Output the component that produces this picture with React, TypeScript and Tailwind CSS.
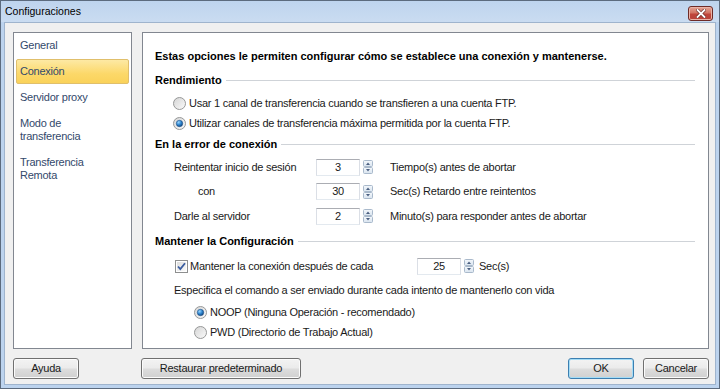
import React from "react";

function Radio({ checked }: { checked?: boolean }) {
  return (
    <svg width="13" height="13" viewBox="0 0 13 13" className="shrink-0">
      <defs>
        <linearGradient id="rOuter" x1="0" y1="0" x2="1" y2="1">
          <stop offset="0" stopColor="#d4d4d4" />
          <stop offset="1" stopColor="#fbfbfb" />
        </linearGradient>
        <radialGradient id="rDot" cx="0.35" cy="0.3" r="0.8">
          <stop offset="0" stopColor="#9bd7ff" />
          <stop offset="0.5" stopColor="#2f86d0" />
          <stop offset="1" stopColor="#0c3c72" />
        </radialGradient>
      </defs>
      <circle cx="6.5" cy="6.5" r="6" fill="url(#rOuter)" stroke="#979898" strokeWidth="1" />
      {checked && <circle cx="6.5" cy="6.5" r="3.2" fill="url(#rDot)" stroke="#1f4f86" strokeWidth="0.6" />}
    </svg>
  );
}

function Checkbox() {
  return (
    <svg width="13" height="13" viewBox="0 0 13 13" className="shrink-0">
      <defs>
        <linearGradient id="cbIn" x1="0" y1="0" x2="1" y2="1">
          <stop offset="0" stopColor="#dcdcdc" />
          <stop offset="1" stopColor="#fbfbfb" />
        </linearGradient>
      </defs>
      <rect x="0.5" y="0.5" width="12" height="12" fill="#fff" stroke="#8e8f8f" />
      <rect x="2" y="2" width="9" height="9" fill="url(#cbIn)" />
      <path d="M3 6.5 L5.3 9 L10 3.2" fill="none" stroke="#3b5da0" strokeWidth="1.8" />
    </svg>
  );
}

function SpinArrows() {
  return (
    <svg width="10" height="14" viewBox="0 0 10 14" className="shrink-0">
      <defs>
        <linearGradient id="spG" x1="0" y1="0" x2="0" y2="1">
          <stop offset="0" stopColor="#f4f8fc" />
          <stop offset="1" stopColor="#d9e4ef" />
        </linearGradient>
      </defs>
      <rect x="0.5" y="0.5" width="9" height="6" rx="1" fill="url(#spG)" stroke="#a9b9cb" />
      <rect x="0.5" y="7.5" width="9" height="6" rx="1" fill="url(#spG)" stroke="#a9b9cb" />
      <path d="M3 5 L5 2.5 L7 5 Z" fill="#4a5f80" />
      <path d="M3 9 L5 11.5 L7 9 Z" fill="#4a5f80" />
    </svg>
  );
}

function Spin({ value }: { value: string }) {
  return (
    <div className="flex items-center shrink-0">
      <div className="w-[44px] h-[17px] bg-white border border-[#abadb3] border-l-[#dbdfe6] border-r-[#dbdfe6] border-b-[#e3e9ef] flex items-center justify-center leading-none">
        {value}
      </div>
      <div className="ml-[3px] flex items-center">
        <SpinArrows />
      </div>
    </div>
  );
}

function SectionHead({ title }: { title: string }) {
  return (
    <div className="flex items-center h-full">
      <span className="font-bold text-[11px] tracking-normal text-black whitespace-nowrap">{title}</span>
      <div className="flex-1 h-px bg-[#cfd3d8] ml-[4px] mt-[1px]" />
    </div>
  );
}

function Btn({ children, w, primary }: { children: React.ReactNode; w: string; primary?: boolean }) {
  return (
    <div
      className={
        "h-[21px] rounded-[3px] border flex items-center justify-center text-[#1a1a1a] bg-[linear-gradient(#f3f3f3_0%,#ebebeb_48%,#dddddd_52%,#d0d0d0_100%)] " +
        w +
        (primary
          ? " border-[#3c7fb1] shadow-[inset_0_0_0_1px_#a4dcf6]"
          : " border-[#707070] shadow-[inset_0_0_0_1px_#fbfbfb]")
      }
    >
      {children}
    </div>
  );
}

export default function App() {
  return (
    <div className="w-[720px] h-[389px] overflow-hidden bg-[#bcd3ee] border border-[#5c6b7e] flex flex-col font-['Liberation_Sans',Arial,sans-serif] text-[11px] tracking-[-0.25px] text-[#1a1a1a]">
      {/* Title bar */}
      <div className="h-[21px] shrink-0 flex items-center justify-between pl-[4px] pr-[6px] bg-[linear-gradient(#bed4ee,#cadcf1)]">
        <span className="text-[10.5px] tracking-normal text-black">Configuraciones</span>
        <div className="w-[25px] h-[15px] mt-[3px] rounded-[3px] border border-[#6e2b27] bg-[linear-gradient(#e4a597_0%,#d27563_45%,#c0453a_55%,#b8433a_100%)] flex items-center justify-center shadow-[inset_0_0_0_1px_#eab3a7]">
          <svg width="10" height="9" viewBox="0 0 10 9">
            <path d="M1.5 1 L8.5 8 M8.5 1 L1.5 8" stroke="#6b2a24" strokeWidth="3.2" strokeLinecap="square" />
            <path d="M1.5 1 L8.5 8 M8.5 1 L1.5 8" stroke="#ffffff" strokeWidth="1.8" strokeLinecap="square" />
          </svg>
        </div>
      </div>

      {/* Client */}
      <div className="flex-1 mx-[3px] mb-[3px] border border-[#9fb4cd] bg-[#f0f0f0] flex flex-col pt-[9px] pl-[8px] pr-[6px] pb-[5px]">
        <div className="h-[317px] flex gap-[10px]">
          {/* Left list */}
          <div className="w-[119px] h-full border border-[#828790] bg-white px-[2px] flex flex-col gap-[1px] text-[#33496b]">
            <div className="border border-transparent rounded-[2px] px-[3px] py-[5px] leading-[13px]">General</div>
            <div className="border border-[#e0bf6b] rounded-[2px] px-[3px] py-[5px] leading-[13px] bg-[linear-gradient(#fde9a4,#fcd869_60%,#fad25a)]">
              Conexión
            </div>
            <div className="border border-transparent rounded-[2px] px-[3px] py-[5px] leading-[13px]">Servidor proxy</div>
            <div className="border border-transparent rounded-[2px] px-[3px] py-[5px] leading-[13px]">
              Modo de
              <br />
              transferencia
            </div>
            <div className="border border-transparent rounded-[2px] px-[3px] py-[5px] leading-[13px]">
              Transferencia
              <br />
              Remota
            </div>
          </div>

          {/* Right panel */}
          <div className="w-[567px] h-full border border-[#828790] bg-white pl-[12px] pr-[13px] pt-[12px] flex flex-col">
            <div className="h-[22px] flex items-center font-bold text-[11px] tracking-normal text-black whitespace-nowrap">
              Estas opciones le permiten configurar cómo se establece una conexión y mantenerse.
            </div>
            <div className="h-[26px]">
              <SectionHead title="Rendimiento" />
            </div>
            <div className="h-[20px] flex items-center pl-[18px] gap-[3px]">
              <Radio />
              <span>Usar 1 canal de transferencia cuando se transfieren a una cuenta FTP.</span>
            </div>
            <div className="h-[20px] flex items-center pl-[18px] gap-[3px]">
              <Radio checked />
              <span>Utilizar canales de transferencia máxima permitida por la cuenta FTP.</span>
            </div>
            <div className="h-[22px]">
              <SectionHead title="En la error de conexión" />
            </div>
            <div className="h-[24px] flex items-center pl-[19px]">
              <span className="w-[142px] shrink-0">Reintentar inicio de sesión</span>
              <Spin value="3" />
              <span className="ml-[17px]">Tiempo(s) antes de abortar</span>
            </div>
            <div className="h-[25px] flex items-center pl-[19px]">
              <span className="w-[142px] shrink-0 pl-[24px]">con</span>
              <Spin value="30" />
              <span className="ml-[17px]">Sec(s) Retardo entre reintentos</span>
            </div>
            <div className="h-[24px] flex items-center pl-[19px]">
              <span className="w-[142px] shrink-0">Darle al servidor</span>
              <Spin value="2" />
              <span className="ml-[17px]">Minuto(s) para responder antes de abortar</span>
            </div>
            <div className="h-[26px]">
              <SectionHead title="Mantener la Configuración" />
            </div>
            <div className="h-[24px] flex items-center pl-[20px]">
              <div className="w-[242px] shrink-0 flex items-center gap-[2px]">
                <Checkbox />
                <span>Mantener la conexión después de cada</span>
              </div>
              <Spin value="25" />
              <span className="ml-[5px]">Sec(s)</span>
            </div>
            <div className="h-[24px] flex items-center pl-[19px]">
              Especifica el comando a ser enviado durante cada intento de mantenerlo con vida
            </div>
            <div className="h-[21px] flex items-center pl-[39px] gap-[3px]">
              <Radio checked />
              <span>NOOP (Ninguna Operación - recomendado)</span>
            </div>
            <div className="h-[19px] flex items-center pl-[39px] gap-[3px]">
              <Radio />
              <span>PWD (Directorio de Trabajo Actual)</span>
            </div>
          </div>
        </div>

        {/* Buttons */}
        <div className="mt-[9px] flex items-center justify-between">
          <div className="flex items-center gap-[62px]">
            <Btn w="w-[66px]">Ayuda</Btn>
            <Btn w="w-[160px]">Restaurar predeterminado</Btn>
          </div>
          <div className="flex items-center gap-[9px]">
            <Btn w="w-[66px]" primary>
              OK
            </Btn>
            <Btn w="w-[66px]">Cancelar</Btn>
          </div>
        </div>
      </div>
    </div>
  );
}
